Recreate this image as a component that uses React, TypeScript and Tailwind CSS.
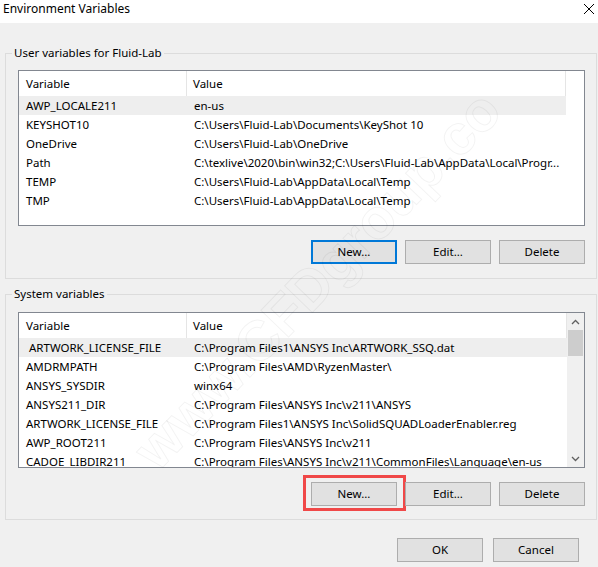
import React from "react";

type EnvVar = { name: string; value: string; indent?: boolean };

const userVars: EnvVar[] = [
  { name: "AWP_LOCALE211", value: "en-us" },
  { name: "KEYSHOT10", value: "C:\\Users\\Fluid-Lab\\Documents\\KeyShot 10" },
  { name: "OneDrive", value: "C:\\Users\\Fluid-Lab\\OneDrive" },
  {
    name: "Path",
    value: "C:\\texlive\\2020\\bin\\win32;C:\\Users\\Fluid-Lab\\AppData\\Local\\Progr...",
  },
  { name: "TEMP", value: "C:\\Users\\Fluid-Lab\\AppData\\Local\\Temp" },
  { name: "TMP", value: "C:\\Users\\Fluid-Lab\\AppData\\Local\\Temp" },
];

const systemVars: EnvVar[] = [
  {
    name: "ARTWORK_LICENSE_FILE",
    value: "C:\\Program Files1\\ANSYS Inc\\ARTWORK_SSQ.dat",
    indent: true,
  },
  { name: "AMDRMPATH", value: "C:\\Program Files\\AMD\\RyzenMaster\\" },
  { name: "ANSYS_SYSDIR", value: "winx64" },
  { name: "ANSYS211_DIR", value: "C:\\Program Files\\ANSYS Inc\\v211\\ANSYS" },
  {
    name: "ARTWORK_LICENSE_FILE",
    value: "C:\\Program Files1\\ANSYS Inc\\SolidSQUADLoaderEnabler.reg",
  },
  { name: "AWP_ROOT211", value: "C:\\Program Files\\ANSYS Inc\\v211" },
  {
    name: "CADOE_LIBDIR211",
    value: "C:\\Program Files\\ANSYS Inc\\v211\\CommonFiles\\Language\\en-us",
  },
];

function Chevron({ up }: { up?: boolean }) {
  return (
    <svg width="9" height="6" viewBox="0 0 9 6" className="block">
      <path
        d={up ? "M1 5 L4.5 1.5 L8 5" : "M1 1 L4.5 4.5 L8 1"}
        fill="none"
        stroke="#606060"
        strokeWidth="1.3"
      />
    </svg>
  );
}

function VarList({ rows, scroll }: { rows: EnvVar[]; scroll?: boolean }) {
  return (
    <div className="flex h-[156px] border border-[#828790] bg-white">
      <div className="min-w-0 flex-1 overflow-hidden">
        <div className="flex h-[25px] items-center">
          <div className="flex h-full w-[168px] items-center border-r border-[#e5e5e5] pl-[7px]">
            Variable
          </div>
          <div className="flex h-full flex-1 items-center border-r border-[#e5e5e5] pl-[6px]">
            Value
          </div>
        </div>
        {rows.map((r, i) => (
          <div
            key={i}
            className={`flex h-[19px] items-center whitespace-nowrap ${
              i === 0 ? "bg-[#eeeeee]" : ""
            }`}
          >
            <div className={`w-[168px] shrink-0 ${r.indent ? "pl-[10px]" : "pl-[7px]"}`}>
              {r.name}
            </div>
            <div className="pl-[7px]">{r.value}</div>
          </div>
        ))}
      </div>
      {scroll ? (
        <div className="flex w-[17px] flex-col bg-[#f0f0f0]">
          <div className="flex h-[17px] items-center justify-center">
            <Chevron up />
          </div>
          <div className="mx-[1px] h-[26px] bg-[#cdcdcd]" />
          <div className="flex-1" />
          <div className="flex h-[17px] items-center justify-center">
            <Chevron />
          </div>
        </div>
      ) : (
        <div className="w-[18px]" />
      )}
    </div>
  );
}

function Btn({
  children,
  focused,
  marked,
}: {
  children: React.ReactNode;
  focused?: boolean;
  marked?: boolean;
}) {
  return (
    <div className="relative">
      <button
        className={`flex h-[24px] w-[86px] items-center justify-center bg-[#e1e1e1] text-black ${
          focused ? "border-2 border-[#0078d7]" : "border border-[#adadad]"
        }`}
      >
        {children}
      </button>
      {marked && (
        <span className="pointer-events-none absolute -left-[8px] -top-[7px] h-[36px] w-[103px] border-[3px] border-[#f04848]" />
      )}
    </div>
  );
}

function GroupBox({
  title,
  rows,
  system,
  className,
}: {
  title: string;
  rows: EnvVar[];
  system?: boolean;
  className?: string;
}) {
  return (
    <fieldset
      className={`ml-[5px] mr-[1px] min-w-0 border border-[#dcdcdc] pl-[12px] pr-[11px] ${className ?? ""}`}
    >
      <legend className="ml-[-6px] px-[2px] leading-[16px]">{title}</legend>
      <VarList rows={rows} scroll={system} />
      <div className="mt-[14px] flex justify-end gap-[8px]">
        <Btn focused={!system} marked={system}>
          New...
        </Btn>
        <Btn>Edit...</Btn>
        <Btn>Delete</Btn>
      </div>
    </fieldset>
  );
}

export default function App() {
  return (
    <div className="relative h-[567px] w-[598px] overflow-hidden bg-[#f0f0f0] font-['Noto_Sans',sans-serif] text-[11.5px] leading-[16px] text-black">
      {/* title bar */}
      <div className="flex h-[23px] items-start justify-between bg-white pl-[3px] pt-[1px] text-[12px]">
        <span>Environment Variables</span>
        <svg width="12" height="12" viewBox="0 0 12 12" className="mr-[3px] mt-[2px]">
          <path d="M1 1 L11 11 M11 1 L1 11" stroke="#000" strokeWidth="1" />
        </svg>
      </div>

      <GroupBox
        title="User variables for Fluid-Lab"
        rows={userVars}
        className="mt-[22px] pt-[9px] pb-[14px]"
      />
      <GroupBox
        title="System variables"
        rows={systemVars}
        system
        className="mt-[7px] pt-[10px] pb-[13px]"
      />

      <div className="mt-[18px] flex justify-end gap-[10px] pr-[19px]">
        <button className="flex h-[24px] w-[86px] items-center justify-center border border-[#adadad] bg-[#e1e1e1]">
          OK
        </button>
        <button className="flex h-[24px] w-[86px] items-center justify-center border border-[#adadad] bg-[#e1e1e1]">
          Cancel
        </button>
      </div>

      {/* site watermark */}
      <div className="pointer-events-none absolute inset-0 flex items-center justify-center">
        <span className="translate-x-[18px] -translate-y-[4px] -rotate-[46deg] whitespace-nowrap font-['Liberation_Sans',sans-serif] text-[56px] font-bold leading-none text-transparent [-webkit-text-stroke:1px_rgba(0,0,0,0.05)]">
          www.CFDgroup.co
        </span>
      </div>
    </div>
  );
}
